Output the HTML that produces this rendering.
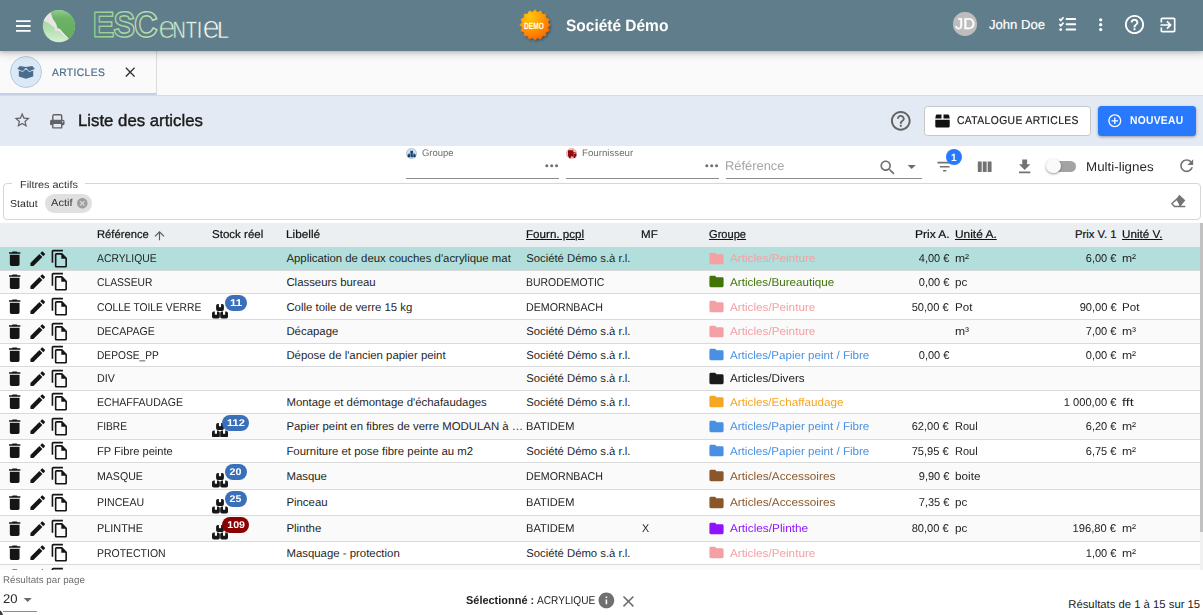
<!DOCTYPE html>
<html lang="fr"><head><meta charset="utf-8"><title>Liste des articles</title>
<style>
*{box-sizing:border-box;margin:0;padding:0}
html,body{width:1203px;height:615px;overflow:hidden;background:#fff;font-family:"Liberation Sans",Arial,sans-serif;color:#1f1f1f;text-rendering:geometricPrecision}
.abs{position:absolute}
#hdr{position:absolute;left:0;top:0;width:1203px;height:50.800px;background:#607d8b;box-shadow:0 0 9px 2px rgba(0,0,0,.2),0 0 4.500px rgba(0,0,0,.24);z-index:5}
#tabs{position:absolute;left:0;top:50px;width:1203px;height:46px;background:#fafafa;border-bottom:1px solid #dadada}
#tab{position:absolute;left:0;top:0;width:157px;height:45px;border-right:1px solid #dcdcdc;border-bottom:2px solid #c3d0e6}
#title{position:absolute;left:0;top:96px;width:1203px;height:50px;background:#e4eaf3}
#card{position:absolute;left:0;top:145.600px;width:1203px;height:470px;background:#fff;border-radius:4px 4px 0 0}
.t{position:absolute;white-space:nowrap}
svg{position:absolute;display:block}
#tbl{position:absolute;left:0;top:223px;width:1203px;height:346.600px;overflow:hidden}
#th{position:absolute;left:0;top:0;width:1200px;height:24px;background:#eceff1}
.row{position:absolute;left:0;width:1200px;border-bottom:1px solid #dadada;background:#fff}
.row.odd{background:#fafafa}
.row.sel{background:#b2dfdb}
.ic{width:19.400px;height:19.400px;fill:#151515}
.fo{width:17px;height:17px;left:707.500px}
.st{width:16px;height:14.600px;left:212px;fill:#171717}
.bd{position:absolute;height:16px;border-radius:8px}
</style></head><body>
<!-- HEADER -->
<div id="hdr">
 <svg style="left:16px;top:19.500px" width="16" height="12" viewBox="0 0 16 12"><path d="M0 1.200h14.600M0 6h14.600M0 10.800h14.600" stroke="#fff" stroke-width="1.800"/></svg>
 <svg style="left:42px;top:9px" width="34" height="34" viewBox="42 9 34 34">
  <defs><clipPath id="lc"><circle cx="58.900" cy="26.100" r="16.100"/></clipPath>
  <linearGradient id="l1" x1="0" y1="0" x2="0" y2="1"><stop offset="0" stop-color="#9fd49a"/><stop offset=".6" stop-color="#b4dfaf"/><stop offset="1" stop-color="#d6f0d2"/></linearGradient>
  <linearGradient id="l2" x1="0" y1="0" x2="0" y2="1"><stop offset="0" stop-color="#9bcf96"/><stop offset=".3" stop-color="#6db367"/><stop offset="1" stop-color="#62aa5c"/></linearGradient></defs>
  <circle cx="58.900" cy="26.100" r="16.100" fill="url(#l1)"/>
  <g clip-path="url(#lc)"><path d="M49 8L52.700 18.700L56.100 24.100L57.100 27.500L59.900 28.900L64 33.700L68 37.800L72 42L80 30L76 8Z" fill="url(#l2)"/>
  <path d="M43 19.500L50.300 12L52.700 18.700L56.100 24.100L57.100 27.500L56.800 28.600L59.900 28.900L64 33.700L68.600 38.400L64.700 36.500L60.100 32.100L57.800 30.700L55.400 31.300L54.700 29.900L55.100 28.600L52.700 26.200L48.200 22.800L43 20.500Z" fill="#e9e5e5"/></g>
 </svg>
 <svg style="left:90px;top:4px" width="144" height="42" viewBox="90 4 144 42">
  <defs><linearGradient id="tg" x1="94" x2="228" gradientUnits="userSpaceOnUse"><stop offset="0" stop-color="#93cd8b"/><stop offset=".5" stop-color="#c2e4bb"/><stop offset=".85" stop-color="#f4faf2"/><stop offset="1" stop-color="#ffffff"/></linearGradient></defs>
  <text font-family="Liberation Sans, sans-serif" y="35.800"><tspan x="93" font-size="33.600" fill="#607d8b" stroke="url(#tg)" stroke-width="3" paint-order="stroke fill" textLength="64" lengthAdjust="spacingAndGlyphs">ESC</tspan><tspan x="158.300" y="38" font-size="32.500" fill="url(#tg)" stroke="#607d8b" stroke-width=".9" textLength="17.300" lengthAdjust="spacingAndGlyphs">e</tspan><tspan x="172.600" y="37.800" font-size="23.700" fill="url(#tg)" stroke="#607d8b" stroke-width=".35" textLength="29.500" lengthAdjust="spacingAndGlyphs">NTI</tspan><tspan x="202.600" y="38" font-size="32.500" fill="url(#tg)" stroke="#607d8b" stroke-width=".9" textLength="17.300" lengthAdjust="spacingAndGlyphs">e</tspan><tspan x="217.300" y="37.800" font-size="23.700" fill="url(#tg)" stroke="#607d8b" stroke-width=".35" textLength="11.500" lengthAdjust="spacingAndGlyphs">L</tspan></text>
 </svg>
 <svg style="left:514.800px;top:5.300px" width="40" height="40" viewBox="-20 -20 40 40">
  <defs><radialGradient id="og" cx="32%" cy="22%" r="85%"><stop offset="0" stop-color="#ffc808"/><stop offset=".5" stop-color="#ff9a00"/><stop offset="1" stop-color="#ff6200"/></radialGradient>
  <filter id="bsh" x="-30%" y="-30%" width="160%" height="160%"><feGaussianBlur stdDeviation="0.900"/></filter></defs>
  <path d="M0.00 -15.30L2.56 -12.85L5.86 -14.14L7.28 -10.89L10.82 -10.82L10.89 -7.28L14.14 -5.86L12.85 -2.56L15.30 0.00L12.85 2.56L14.14 5.86L10.89 7.28L10.82 10.82L7.28 10.89L5.86 14.14L2.56 12.85L0.00 15.30L-2.56 12.85L-5.86 14.14L-7.28 10.89L-10.82 10.82L-10.89 7.28L-14.14 5.86L-12.85 2.56L-15.30 0.00L-12.85 -2.56L-14.14 -5.86L-10.89 -7.28L-10.82 -10.82L-7.28 -10.89L-5.86 -14.14L-2.56 -12.85Z" transform="translate(1.300 1.500)" fill="rgba(35,45,55,.55)" filter="url(#bsh)"/>
  <path d="M0.00 -15.30L2.56 -12.85L5.86 -14.14L7.28 -10.89L10.82 -10.82L10.89 -7.28L14.14 -5.86L12.85 -2.56L15.30 0.00L12.85 2.56L14.14 5.86L10.89 7.28L10.82 10.82L7.28 10.89L5.86 14.14L2.56 12.85L0.00 15.30L-2.56 12.85L-5.86 14.14L-7.28 10.89L-10.82 10.82L-10.89 7.28L-14.14 5.86L-12.85 2.56L-15.30 0.00L-12.85 -2.56L-14.14 -5.86L-10.89 -7.28L-10.82 -10.82L-7.28 -10.89L-5.86 -14.14L-2.56 -12.85Z" fill="url(#og)" stroke="url(#og)" stroke-width=".6" stroke-linejoin="round"/>
  <text x="-10.900" y="3.500" font-family="Liberation Sans, sans-serif" font-weight="bold" font-size="9" fill="#fff" textLength="19.800" lengthAdjust="spacingAndGlyphs">DEMO</text>
 </svg>
 <span class="t" style="top:18px;font-size:16.4px;line-height:16.4px;left:565.75px;transform-origin:0 0;transform:scaleX(0.9441);color:#fff;font-weight:bold;">Société Démo</span>
 <div class="abs" style="left:953.100px;top:12px;width:23.600px;height:23.600px;border-radius:50%;background:#bdbdbd"></div>
 <span class="t" style="top:17px;font-size:15.5px;line-height:15.5px;left:954.74px;transform-origin:0 0;transform:scaleX(1.0574);color:#fff;-webkit-text-stroke:.25px #fff">JD</span>
 <span class="t" style="top:18px;font-size:13.1px;line-height:13.1px;left:988.90px;transform-origin:0 0;color:#fff;-webkit-text-stroke:.2px #fff">John Doe</span>
 <svg style="left:1056px;top:14px" width="22" height="20" viewBox="1056 14 22 20" fill="none" stroke="#fff"><path d="M1059.300 18.900l1.500 1.500 2.700-3.100M1059.300 24.200l1.500 1.500 2.700-3.100" stroke-width="1.700"/><circle cx="1060.700" cy="29.600" r="1.450" fill="#fff" stroke="none"/><path d="M1066.600 19H1075.200M1066.600 24.300H1075.200M1066.600 29.600H1075.200" stroke-width="2" stroke-linecap="round"/></svg>
 <svg style="left:1091px;top:15.200px" width="19.400" height="19.400" viewBox="0 0 24 24" fill="#fff"><circle cx="12" cy="6" r="2"/><circle cx="12" cy="12" r="2"/><circle cx="12" cy="18" r="2"/></svg>
 <svg style="left:1123.300px;top:13.100px" width="23" height="23" viewBox="0 0 24 24" fill="#fff"><path d="M11 18h2v-2h-2v2zm1-16C6.480 2 2 6.480 2 12s4.480 10 10 10 10-4.480 10-10S17.520 2 12 2zm0 18c-4.410 0-8-3.590-8-8s3.590-8 8-8 8 3.590 8 8-3.590 8-8 8zm0-14c-2.210 0-4 1.790-4 4h2c0-1.100.9-2 2-2s2 .9 2 2c0 2-3 1.750-3 5h2c0-2.250 3-2.500 3-5 0-2.210-1.790-4-4-4z"/></svg>
 <svg style="left:1158.100px;top:14.800px" width="20" height="20" viewBox="0 0 24 24" fill="#fff"><path d="M10.090 15.590L11.500 17l5-5-5-5-1.410 1.410L12.670 11H3v2h9.670l-2.580 2.590zM19 3H5c-1.110 0-2 .9-2 2v4h2V5h14v14H5v-4H3v4c0 1.100.890 2 2 2h14c1.100 0 2-.9 2-2V5c0-1.100-.9-2-2-2z"/></svg>
</div>
<!-- TABS -->
<div id="tabs"><div id="tab">
 <div class="abs" style="left:10.100px;top:6px;width:31.800px;height:31.800px;border-radius:50%;background:#dbe9f6;border:1px solid #b6cae2"></div>
 <svg style="left:16px;top:14px" width="20" height="16" viewBox="16 64 20 16"><path d="M18.800 69.500H33.200V76.600L26 78.700L18.800 76.600Z" fill="#4a6c8f"/><path d="M19.800 66L26 66.900L32.200 66L35 68.900L29.200 70.700L26 67.900L22.800 70.700L17.200 68.900Z" fill="#4a6c8f"/><path d="M18.200 70.100L22.900 71.500L26 68.500L29.100 71.500L33.800 70.100" fill="none" stroke="#dbe9f6" stroke-width=".85"/></svg>
 <span class="t" style="top:18px;font-size:10.9px;line-height:10.9px;left:51.88px;transform-origin:0 0;transform:scaleX(0.9421);letter-spacing:0.425px;color:#4a6a8c;-webkit-text-stroke:.2px currentColor;">ARTICLES</span>
 <svg style="left:125px;top:16.700px" width="10.400" height="10.400" viewBox="0 0 10.400 10.400"><path d="M.8 .8l8.800 8.800M9.600 .8l-8.800 8.800" stroke="#333" stroke-width="1.350"/></svg>
</div></div>
<!-- TITLE BAR -->
<div id="title">
 <svg style="left:13.300px;top:15.200px" width="18.400" height="18.400" viewBox="0 0 24 24" fill="#636366"><path d="M22 9.240l-7.190-.62L12 2 9.190 8.630 2 9.240l5.460 4.730L5.820 21 12 17.270 18.180 21l-1.630-7.030L22 9.240zM12 15.400l-3.760 2.270 1-4.280-3.320-2.880 4.380-.38L12 6.100l1.710 4.040 4.380.38-3.320 2.880 1 4.280L12 15.400z"/></svg>
 <svg style="left:48px;top:16px" width="20" height="18" viewBox="48 112 20 18"><rect x="52.800" y="114.700" width="8.900" height="6" rx="1.300" fill="none" stroke="#636366" stroke-width="1.400"/><rect x="50" y="119.800" width="14.500" height="5.400" rx="1.500" fill="#636366"/><rect x="52.800" y="123.200" width="8.900" height="4.700" rx=".5" fill="#e4eaf3" stroke="#636366" stroke-width="1.400"/><circle cx="62.600" cy="121.700" r=".75" fill="#e4eaf3"/></svg>
 <span class="t" style="top:17px;font-size:16.6px;line-height:16.6px;left:77.82px;transform-origin:0 0;transform:scaleX(1.0104);color:#1b1b1b;-webkit-text-stroke:.4px #1b1b1b">Liste des articles</span>
 <svg style="left:888.800px;top:12.700px" width="23.600" height="23.600" viewBox="0 0 24 24" fill="#636366"><path d="M11 18h2v-2h-2v2zm1-16C6.480 2 2 6.480 2 12s4.480 10 10 10 10-4.480 10-10S17.520 2 12 2zm0 18c-4.410 0-8-3.590-8-8s3.590-8 8-8 8 3.590 8 8-3.590 8-8 8zm0-14c-2.210 0-4 1.790-4 4h2c0-1.100.9-2 2-2s2 .9 2 2c0 2-3 1.750-3 5h2c0-2.250 3-2.500 3-5 0-2.210-1.790-4-4-4z"/></svg>
 <div class="abs" style="left:924px;top:10.200px;width:166.500px;height:29.500px;background:#fff;border:1px solid #c6c6c6;border-radius:3.500px"></div>
 <svg style="left:935px;top:17.600px" width="15" height="14" viewBox="0 0 15 14" fill="#111"><path d="M.8 1.500 Q1 .4 2 .4 H6.500 V4.600 H.3 Z M8.500 .4 H13 Q14 .4 14.200 1.500 L14.700 4.600 H8.500 Z M.3 5.800 H14.700 V12.200 Q14.700 13.600 13.300 13.600 H1.700 Q.3 13.600 .3 12.200 Z"/></svg>
 <span class="t" style="top:20px;font-size:11.3px;line-height:11.3px;left:956.78px;transform-origin:0 0;transform:scaleX(0.9135);letter-spacing:0.438px;color:#1b1b1b;-webkit-text-stroke:.2px currentColor;">CATALOGUE ARTICLES</span>
 <div class="abs" style="left:1098px;top:10.300px;width:98px;height:29.300px;background:#2979ff;border-radius:3.500px;box-shadow:0 1px 3px rgba(0,0,0,.35)"></div>
 <svg style="left:1106.700px;top:17px" width="15.600" height="15.600" viewBox="0 0 24 24" fill="#fff"><path d="M13 7h-2v4H7v2h4v4h2v-4h4v-2h-4V7zm-1-5C6.480 2 2 6.480 2 12s4.480 10 10 10 10-4.480 10-10S17.520 2 12 2zm0 18c-4.410 0-8-3.590-8-8s3.590-8 8-8 8 3.590 8 8-3.590 8-8 8z"/></svg>
 <span class="t" style="top:20px;font-size:11.3px;line-height:11.3px;left:1129.71px;transform-origin:0 0;transform:scaleX(0.9082);letter-spacing:0.330px;color:#fff;font-weight:bold;">NOUVEAU</span>
</div>
<!-- CARD -->
<div id="card"></div>
<!-- FILTER BAR -->
<div id="fbar">
 <div class="abs" style="left:405.900px;top:148.100px;width:11.300px;height:11.300px;border-radius:50%;background:#d0e1f3;border:1px solid #adc6e2"></div>
 <svg style="left:406px;top:148px" width="12" height="12" viewBox="406 148 12 12" fill="#0f3a66"><rect x="410.400" y="150.800" width="2.500" height="2.500"/><rect x="411.300" y="153" width=".8" height="1.600"/><rect x="408.500" y="153.600" width="6.300" height=".75"/><rect x="407.700" y="154.300" width="2.300" height="2.900"/><rect x="410.500" y="154.300" width="2.300" height="2.900"/><rect x="413.300" y="154.300" width="2.300" height="2.900"/></svg>
 <span class="t" style="top:149px;font-size:9.6px;line-height:9.6px;left:422.32px;transform-origin:0 0;transform:scaleX(0.9874);color:#6e6e6e;">Groupe</span>
 <svg style="left:542.200px;top:155.800px" width="19.400" height="19.400" viewBox="0 0 24 24" fill="#707070"><circle cx="6" cy="12" r="1.900"/><circle cx="12" cy="12" r="1.900"/><circle cx="18" cy="12" r="1.900"/></svg>
 <div class="abs" style="left:406px;top:177.600px;width:152.600px;height:1px;background:#8c8c8c"></div>
 <div class="abs" style="left:565.900px;top:148.100px;width:11.400px;height:11.400px;border-radius:50%;background:#f4c3c7;border:1px solid #ecaab0"></div>
 <svg style="left:566px;top:148px" width="12" height="12" viewBox="566 148 12 12" fill="#8c0a0a"><rect x="568" y="150.200" width="5.300" height="6.400" rx=".4"/><path d="M573.300 151.900h1.700l1.400 1.900v2.800h-3.100z"/><circle cx="569.900" cy="157" r="1.150"/><circle cx="574.500" cy="157" r="1.150"/><path d="M574 152.700h.8l.8 1.100h-1.600z" fill="#f4c3c7"/></svg>
 <span class="t" style="top:149px;font-size:9.6px;line-height:9.6px;left:582.20px;transform-origin:0 0;transform:scaleX(1.0099);color:#6e6e6e;">Fournisseur</span>
 <svg style="left:702.400px;top:155.800px" width="19.400" height="19.400" viewBox="0 0 24 24" fill="#707070"><circle cx="6" cy="12" r="1.900"/><circle cx="12" cy="12" r="1.900"/><circle cx="18" cy="12" r="1.900"/></svg>
 <div class="abs" style="left:566px;top:177.600px;width:152.800px;height:1px;background:#8c8c8c"></div>
 <span class="t" style="top:160px;font-size:12.6px;line-height:12.6px;left:724.94px;transform-origin:0 0;transform:scaleX(1.0227);color:#a6a6a6;">Référence</span>
 <div class="abs" style="left:726px;top:177.600px;width:196px;height:1px;background:#8c8c8c"></div>
 <svg style="left:878.100px;top:158.300px" width="19.400" height="19.400" viewBox="0 0 24 24" fill="#727272"><path d="M15.500 14h-.79l-.28-.27C15.410 12.590 16 11.110 16 9.500 16 5.910 13.090 3 9.500 3S3 5.910 3 9.500 5.910 16 9.500 16c1.610 0 3.090-.59 4.230-1.570l.27.28v.79l5 4.990L20.490 19l-4.990-5zm-6 0C7.010 14 5 11.990 5 9.500S7.010 5 9.500 5 14 7.010 14 9.500 11.990 14 9.500 14z"/></svg>
 <svg style="left:901.900px;top:156.600px" width="19.400" height="19.400" viewBox="0 0 24 24" fill="#6a6a6a"><path d="M7 10l5 5 5-5z"/></svg>
 <svg style="left:935.200px;top:157.300px" width="19.400" height="19.400" viewBox="0 0 24 24" fill="#727272"><path d="M10 18h4v-2h-4v2zM3 6v2h18V6H3zm3 7h12v-2H6v2z"/></svg>
 <div class="abs" style="left:946.100px;top:149.200px;width:16px;height:16px;border-radius:50%;background:#2979ff"></div>
 <span class="t" style="top:154px;font-size:10.4px;line-height:10.4px;left:951.30px;transform-origin:0 0;transform:scaleX(0.9686);color:#fff;font-weight:bold;">1</span>
 <svg style="left:975px;top:156.900px" width="19.400" height="19.400" viewBox="0 0 24 24" fill="#727272"><path d="M3.500 5.500h4.800v13H3.500zM9.600 5.500h4.800v13H9.600zM15.700 5.500h4.800v13h-4.800z"/></svg>
 <svg style="left:1015px;top:157.300px" width="19.400" height="19.400" viewBox="0 0 24 24" fill="#727272"><path d="M19 9h-4V3H9v6H5l7 7 7-7zM5 18v2h14v-2H5z"/></svg>
 <div class="abs" style="left:1049px;top:160.800px;width:27px;height:11.100px;border-radius:6px;background:#a3a3a3"></div>
 <div class="abs" style="left:1046.100px;top:158.600px;width:14.800px;height:14.800px;border-radius:50%;background:#fafafa;box-shadow:0 1px 2.500px rgba(0,0,0,.4)"></div>
 <span class="t" style="top:161px;font-size:12.6px;line-height:12.6px;left:1085.50px;transform-origin:0 0;transform:scaleX(1.0609);color:#2a2a2a;">Multi-lignes</span>
 <svg style="left:1176.900px;top:156.400px" width="19.400" height="19.400" viewBox="0 0 24 24" fill="#727272"><path d="M17.650 6.350C16.200 4.900 14.210 4 12 4c-4.420 0-7.990 3.580-7.990 8s3.570 8 7.990 8c3.730 0 6.840-2.550 7.730-6h-2.080c-.82 2.330-3.040 4-5.650 4-3.310 0-6-2.690-6-6s2.690-6 6-6c1.660 0 3.140.69 4.220 1.780L13 11h7V4l-2.350 2.350z"/></svg>
</div>
<!-- ACTIVE FILTERS -->
<div class="abs" style="left:3px;top:183.200px;width:1198px;height:36.700px;border:1px solid #d6d6d6;border-radius:4px"></div>
<div class="abs" style="left:12px;top:182px;width:73px;height:4px;background:#fff"></div>
<span class="t" style="top:181px;font-size:10.1px;line-height:10.1px;left:19.51px;transform-origin:0 0;transform:scaleX(1.0750);color:#333;">Filtres actifs</span>
<span class="t" style="top:200px;font-size:10.1px;line-height:10.1px;left:10.32px;transform-origin:0 0;transform:scaleX(1.0487);color:#2a2a2a;">Statut</span>
<div class="abs" style="left:44.900px;top:194.200px;width:46.900px;height:18.500px;border-radius:9.300px;background:#e0e0e0"></div>
<span class="t" style="top:199px;font-size:10.1px;line-height:10.1px;left:51.18px;transform-origin:0 0;transform:scaleX(1.1000);color:#333;">Actif</span>
<svg style="left:76.200px;top:197.100px" width="12.600" height="12.600" viewBox="0 0 24 24" fill="#9e9e9e"><path d="M12 2C6.470 2 2 6.470 2 12s4.470 10 10 10 10-4.470 10-10S17.530 2 12 2zm5 13.590L15.590 17 12 13.410 8.410 17 7 15.590 10.590 12 7 8.410 8.410 7 12 10.590 15.590 7 17 8.410 13.410 12 17 15.590z"/></svg>
<svg style="left:1168px;top:192px" width="20" height="18" viewBox="1168 192 20 18"><path d="M1179.400 195.600L1184.500 200.400L1180.300 205.200L1176.900 199.500Z" fill="#747474" stroke="#747474" stroke-width="1.300" stroke-linejoin="round"/><path d="M1177.400 198.600L1171.800 203.500L1174.500 206.500H1184.800M1179 206.500L1181.500 203.800" fill="none" stroke="#747474" stroke-width="1.400" stroke-linejoin="round" stroke-linecap="round"/></svg>
<!-- TABLE -->
<div id="tbl">
 <div id="th"></div>
 <span class="t" style="top:7px;font-size:11.3px;line-height:11.3px;left:96.58px;transform-origin:0 0;transform:scaleX(0.9922);color:#111;-webkit-text-stroke:.2px currentColor;">Référence</span>
 <svg style="left:154px;top:8px" width="11" height="9.500" viewBox="0 0 11 9.500" fill="none" stroke="#5b5562" stroke-width="1.150"><path d="M5.500 9.200V.9M1 5.400L5.500 .9 10 5.400"/></svg>
 <span class="t" style="top:7px;font-size:11.3px;line-height:11.3px;left:211.58px;transform-origin:0 0;transform:scaleX(1.0211);color:#111;-webkit-text-stroke:.2px currentColor;">Stock réel</span>
 <span class="t" style="top:7px;font-size:11.3px;line-height:11.3px;left:285.93px;transform-origin:0 0;transform:scaleX(1.0434);color:#111;-webkit-text-stroke:.2px currentColor;">Libellé</span>
 <span class="t" style="top:7px;font-size:11.3px;line-height:11.3px;left:525.85px;transform-origin:0 0;transform:scaleX(1.0286);color:#111;-webkit-text-stroke:.2px currentColor;text-decoration:underline">Fourn. pcpl</span>
 <span class="t" style="top:7px;font-size:11.3px;line-height:11.3px;left:640.95px;transform-origin:0 0;transform:scaleX(1.0246);color:#111;-webkit-text-stroke:.2px currentColor;">MF</span>
 <span class="t" style="top:7px;font-size:11.3px;line-height:11.3px;left:708.74px;transform-origin:0 0;transform:scaleX(0.9831);color:#111;-webkit-text-stroke:.2px currentColor;text-decoration:underline">Groupe</span>
 <span class="t" style="top:7px;font-size:11.3px;line-height:11.3px;right:253.80px;transform-origin:100% 0;transform:scaleX(1.0620);color:#111;-webkit-text-stroke:.2px currentColor;">Prix A.</span>
 <span class="t" style="top:7px;font-size:11.3px;line-height:11.3px;left:954.68px;transform-origin:0 0;transform:scaleX(1.0542);color:#111;-webkit-text-stroke:.2px currentColor;text-decoration:underline">Unité A.</span>
 <span class="t" style="top:7px;font-size:11.3px;line-height:11.3px;right:86.45px;transform-origin:100% 0;color:#111;-webkit-text-stroke:.2px currentColor;">Prix V. 1</span>
 <span class="t" style="top:7px;font-size:11.3px;line-height:11.3px;left:1122.20px;transform-origin:0 0;transform:scaleX(1.0335);color:#111;-webkit-text-stroke:.2px currentColor;text-decoration:underline">Unité V.</span>
<div class="row sel" style="top:24.0px;height:24.0px"></div>
<svg class="ic" style="left:5.300px;top:25.8px" viewBox="0 0 24 24"><path d="M6 19c0 1.100.9 2 2 2h8c1.100 0 2-.9 2-2V7H6v12zM19 4h-3.500l-1-1h-5l-1 1H5v2h14V4z"/></svg><svg class="ic" style="left:27.500px;top:25.8px" viewBox="0 0 24 24"><path d="M3 17.250V21h3.750L17.810 9.940l-3.750-3.750L3 17.250zM20.710 7.040a.996.996 0 0 0 0-1.410l-2.340-2.340a.996.996 0 0 0-1.410 0l-1.830 1.830 3.750 3.750 1.830-1.830z"/></svg><svg class="ic" style="left:49.800px;top:25.8px" viewBox="0 0 24 24"><path d="M16 1H4c-1.100 0-2 .9-2 2v14h2V3h12V1zm-1 4H8c-1.100 0-1.990.9-1.990 2L6 21c0 1.100.890 2 1.990 2H19c1.100 0 2-.9 2-2V11l-6-6zM8 21V7h6v5h5v9H8z"/></svg>
<span class="t" style="top:31px;font-size:11.3px;line-height:11.3px;left:97.10px;transform-origin:0 0;transform:scaleX(0.9166);">ACRYLIQUE</span>
<span class="t" style="top:31px;font-size:11.4px;line-height:11.4px;left:286.40px;transform-origin:0 0;">Application de deux couches d'acrylique mat</span>
<span class="t" style="top:31px;font-size:11.3px;line-height:11.3px;left:526.20px;transform-origin:0 0;">Société Démo s.à r.l.</span>
<svg class="fo" style="top:26.5px" viewBox="0 0 24 24" fill="#f4a0a4"><path d="M10 4H4c-1.100 0-1.990.9-1.990 2L2 18c0 1.100.9 2 2 2h16c1.100 0 2-.9 2-2V8c0-1.100-.9-2-2-2h-8l-2-2z"/></svg>
<span class="t" style="top:31px;font-size:11.3px;line-height:11.3px;left:729.75px;transform-origin:0 0;transform:scaleX(1.0374);color:#f4a0a4;">Articles/Peinture</span>
<span class="t" style="top:31px;font-size:11.3px;line-height:11.3px;right:254.00px;transform-origin:100% 0;transform:scaleX(0.9759);">4,00 €</span>
<span class="t" style="top:31px;font-size:11.3px;line-height:11.3px;left:954.60px;transform-origin:0 0;transform:scaleX(1.0747);">m²</span>
<span class="t" style="top:31px;font-size:11.3px;line-height:11.3px;right:86.60px;transform-origin:100% 0;transform:scaleX(0.9759);">6,00 €</span>
<span class="t" style="top:31px;font-size:11.3px;line-height:11.3px;left:1122.10px;transform-origin:0 0;transform:scaleX(1.0747);">m²</span>
<div class="row odd" style="top:48.0px;height:23.0px"></div>
<svg class="ic" style="left:5.300px;top:49.3px" viewBox="0 0 24 24"><path d="M6 19c0 1.100.9 2 2 2h8c1.100 0 2-.9 2-2V7H6v12zM19 4h-3.500l-1-1h-5l-1 1H5v2h14V4z"/></svg><svg class="ic" style="left:27.500px;top:49.3px" viewBox="0 0 24 24"><path d="M3 17.250V21h3.750L17.810 9.940l-3.750-3.750L3 17.250zM20.710 7.040a.996.996 0 0 0 0-1.410l-2.340-2.340a.996.996 0 0 0-1.410 0l-1.830 1.830 3.750 3.750 1.830-1.830z"/></svg><svg class="ic" style="left:49.800px;top:49.3px" viewBox="0 0 24 24"><path d="M16 1H4c-1.100 0-2 .9-2 2v14h2V3h12V1zm-1 4H8c-1.100 0-1.990.9-1.990 2L6 21c0 1.100.890 2 1.990 2H19c1.100 0 2-.9 2-2V11l-6-6zM8 21V7h6v5h5v9H8z"/></svg>
<span class="t" style="top:55px;font-size:11.3px;line-height:11.3px;left:97.10px;transform-origin:0 0;transform:scaleX(0.9097);">CLASSEUR</span>
<span class="t" style="top:55px;font-size:11.4px;line-height:11.4px;left:286.40px;transform-origin:0 0;">Classeurs bureau</span>
<span class="t" style="top:55px;font-size:11.3px;line-height:11.3px;left:526.20px;transform-origin:0 0;transform:scaleX(0.9254);">BURODEMOTIC</span>
<svg class="fo" style="top:50.0px" viewBox="0 0 24 24" fill="#417505"><path d="M10 4H4c-1.100 0-1.990.9-1.990 2L2 18c0 1.100.9 2 2 2h16c1.100 0 2-.9 2-2V8c0-1.100-.9-2-2-2h-8l-2-2z"/></svg>
<span class="t" style="top:55px;font-size:11.3px;line-height:11.3px;left:729.75px;transform-origin:0 0;transform:scaleX(1.0305);color:#417505;">Articles/Bureautique</span>
<span class="t" style="top:55px;font-size:11.3px;line-height:11.3px;right:254.00px;transform-origin:100% 0;transform:scaleX(0.9759);">0,00 €</span>
<span class="t" style="top:55px;font-size:11.3px;line-height:11.3px;left:954.60px;transform-origin:0 0;transform:scaleX(1.0356);">pc</span>
<div class="row" style="top:71.0px;height:26.0px"></div>
<svg class="ic" style="left:5.300px;top:73.8px" viewBox="0 0 24 24"><path d="M6 19c0 1.100.9 2 2 2h8c1.100 0 2-.9 2-2V7H6v12zM19 4h-3.500l-1-1h-5l-1 1H5v2h14V4z"/></svg><svg class="ic" style="left:27.500px;top:73.8px" viewBox="0 0 24 24"><path d="M3 17.250V21h3.750L17.810 9.940l-3.750-3.750L3 17.250zM20.710 7.040a.996.996 0 0 0 0-1.410l-2.340-2.340a.996.996 0 0 0-1.410 0l-1.830 1.830 3.750 3.750 1.830-1.830z"/></svg><svg class="ic" style="left:49.800px;top:73.8px" viewBox="0 0 24 24"><path d="M16 1H4c-1.100 0-2 .9-2 2v14h2V3h12V1zm-1 4H8c-1.100 0-1.990.9-1.990 2L6 21c0 1.100.890 2 1.990 2H19c1.100 0 2-.9 2-2V11l-6-6zM8 21V7h6v5h5v9H8z"/></svg>
<span class="t" style="top:80px;font-size:11.3px;line-height:11.3px;left:97.10px;transform-origin:0 0;transform:scaleX(0.9106);">COLLE TOILE VERRE</span>
<svg class="st" style="top:81.0px" viewBox="0 0 16 14.600"><path d="M4.100 0m1.800 0h1.000v2.600q0 .6.600.6h1.000q.6 0 .6-.6v-2.600h1.000q1.800 0 1.800 1.800v3.400q0 1.800-1.800 1.800h-4.200q-1.800 0-1.800-1.800v-3.400q0-1.800 1.800-1.800zM0 7.600m1.800 0h1.000v2.600q0 .6.600.6h1.000q.6 0 .6-.6v-2.600h1.000q1.800 0 1.800 1.800v3.400q0 1.800-1.800 1.800h-4.200q-1.800 0-1.800-1.800v-3.400q0-1.800 1.800-1.800zM8.200 7.600m1.800 0h1.000v2.600q0 .6.600.6h1.000q.6 0 .6-.6v-2.600h1.000q1.800 0 1.800 1.800v3.400q0 1.800-1.800 1.800h-4.200q-1.800 0-1.800-1.800v-3.400q0-1.800 1.800-1.800z"/></svg>
<span class="bd" style="top:72px;left:225.1px;width:21.5px;background:#3a6fba"></span>
<span class="t" style="top:76px;font-size:9.8px;line-height:9.8px;left:230.62px;transform-origin:50% 0;transform:scaleX(1.1722);color:#fff;font-weight:bold;">11</span>
<span class="t" style="top:80px;font-size:11.4px;line-height:11.4px;left:286.40px;transform-origin:0 0;">Colle toile de verre 15 kg</span>
<span class="t" style="top:80px;font-size:11.3px;line-height:11.3px;left:526.20px;transform-origin:0 0;transform:scaleX(0.9434);">DEMORNBACH</span>
<svg class="fo" style="top:74.5px" viewBox="0 0 24 24" fill="#f4a0a4"><path d="M10 4H4c-1.100 0-1.990.9-1.990 2L2 18c0 1.100.9 2 2 2h16c1.100 0 2-.9 2-2V8c0-1.100-.9-2-2-2h-8l-2-2z"/></svg>
<span class="t" style="top:80px;font-size:11.3px;line-height:11.3px;left:729.75px;transform-origin:0 0;transform:scaleX(1.0374);color:#f4a0a4;">Articles/Peinture</span>
<span class="t" style="top:80px;font-size:11.3px;line-height:11.3px;right:254.00px;transform-origin:100% 0;transform:scaleX(0.9831);">50,00 €</span>
<span class="t" style="top:80px;font-size:11.3px;line-height:11.3px;left:954.60px;transform-origin:0 0;transform:scaleX(1.0264);">Pot</span>
<span class="t" style="top:80px;font-size:11.3px;line-height:11.3px;right:86.60px;transform-origin:100% 0;transform:scaleX(0.9831);">90,00 €</span>
<span class="t" style="top:80px;font-size:11.3px;line-height:11.3px;left:1122.10px;transform-origin:0 0;transform:scaleX(1.0264);">Pot</span>
<div class="row odd" style="top:97.0px;height:24.0px"></div>
<svg class="ic" style="left:5.300px;top:98.8px" viewBox="0 0 24 24"><path d="M6 19c0 1.100.9 2 2 2h8c1.100 0 2-.9 2-2V7H6v12zM19 4h-3.500l-1-1h-5l-1 1H5v2h14V4z"/></svg><svg class="ic" style="left:27.500px;top:98.8px" viewBox="0 0 24 24"><path d="M3 17.250V21h3.750L17.810 9.940l-3.750-3.750L3 17.250zM20.710 7.040a.996.996 0 0 0 0-1.410l-2.340-2.340a.996.996 0 0 0-1.410 0l-1.830 1.830 3.750 3.750 1.830-1.830z"/></svg><svg class="ic" style="left:49.800px;top:98.8px" viewBox="0 0 24 24"><path d="M16 1H4c-1.100 0-2 .9-2 2v14h2V3h12V1zm-1 4H8c-1.100 0-1.990.9-1.990 2L6 21c0 1.100.890 2 1.990 2H19c1.100 0 2-.9 2-2V11l-6-6zM8 21V7h6v5h5v9H8z"/></svg>
<span class="t" style="top:104px;font-size:11.3px;line-height:11.3px;left:97.10px;transform-origin:0 0;transform:scaleX(0.9311);">DECAPAGE</span>
<span class="t" style="top:104px;font-size:11.4px;line-height:11.4px;left:286.40px;transform-origin:0 0;">Décapage</span>
<span class="t" style="top:104px;font-size:11.3px;line-height:11.3px;left:526.20px;transform-origin:0 0;">Société Démo s.à r.l.</span>
<svg class="fo" style="top:99.5px" viewBox="0 0 24 24" fill="#f4a0a4"><path d="M10 4H4c-1.100 0-1.990.9-1.990 2L2 18c0 1.100.9 2 2 2h16c1.100 0 2-.9 2-2V8c0-1.100-.9-2-2-2h-8l-2-2z"/></svg>
<span class="t" style="top:104px;font-size:11.3px;line-height:11.3px;left:729.75px;transform-origin:0 0;transform:scaleX(1.0374);color:#f4a0a4;">Articles/Peinture</span>
<span class="t" style="top:104px;font-size:11.3px;line-height:11.3px;left:954.60px;transform-origin:0 0;transform:scaleX(1.0747);">m³</span>
<span class="t" style="top:104px;font-size:11.3px;line-height:11.3px;right:86.60px;transform-origin:100% 0;transform:scaleX(0.9759);">7,00 €</span>
<span class="t" style="top:104px;font-size:11.3px;line-height:11.3px;left:1122.10px;transform-origin:0 0;transform:scaleX(1.0747);">m³</span>
<div class="row" style="top:121.0px;height:23.0px"></div>
<svg class="ic" style="left:5.300px;top:122.3px" viewBox="0 0 24 24"><path d="M6 19c0 1.100.9 2 2 2h8c1.100 0 2-.9 2-2V7H6v12zM19 4h-3.500l-1-1h-5l-1 1H5v2h14V4z"/></svg><svg class="ic" style="left:27.500px;top:122.3px" viewBox="0 0 24 24"><path d="M3 17.250V21h3.750L17.810 9.940l-3.750-3.750L3 17.250zM20.710 7.040a.996.996 0 0 0 0-1.410l-2.340-2.340a.996.996 0 0 0-1.410 0l-1.830 1.830 3.750 3.750 1.830-1.830z"/></svg><svg class="ic" style="left:49.800px;top:122.3px" viewBox="0 0 24 24"><path d="M16 1H4c-1.100 0-2 .9-2 2v14h2V3h12V1zm-1 4H8c-1.100 0-1.990.9-1.990 2L6 21c0 1.100.890 2 1.990 2H19c1.100 0 2-.9 2-2V11l-6-6zM8 21V7h6v5h5v9H8z"/></svg>
<span class="t" style="top:128px;font-size:11.3px;line-height:11.3px;left:97.10px;transform-origin:0 0;transform:scaleX(0.9021);">DEPOSE_PP</span>
<span class="t" style="top:128px;font-size:11.4px;line-height:11.4px;left:286.40px;transform-origin:0 0;">Dépose de l'ancien papier peint</span>
<span class="t" style="top:128px;font-size:11.3px;line-height:11.3px;left:526.20px;transform-origin:0 0;">Société Démo s.à r.l.</span>
<svg class="fo" style="top:123.0px" viewBox="0 0 24 24" fill="#4a90e2"><path d="M10 4H4c-1.100 0-1.990.9-1.990 2L2 18c0 1.100.9 2 2 2h16c1.100 0 2-.9 2-2V8c0-1.100-.9-2-2-2h-8l-2-2z"/></svg>
<span class="t" style="top:128px;font-size:11.3px;line-height:11.3px;left:729.75px;transform-origin:0 0;transform:scaleX(1.0273);color:#4a90e2;">Articles/Papier peint / Fibre</span>
<span class="t" style="top:128px;font-size:11.3px;line-height:11.3px;right:254.00px;transform-origin:100% 0;transform:scaleX(0.9759);">0,00 €</span>
<span class="t" style="top:128px;font-size:11.3px;line-height:11.3px;right:86.60px;transform-origin:100% 0;transform:scaleX(0.9759);">0,00 €</span>
<span class="t" style="top:128px;font-size:11.3px;line-height:11.3px;left:1122.10px;transform-origin:0 0;transform:scaleX(1.0747);">m²</span>
<div class="row odd" style="top:144.0px;height:24.0px"></div>
<svg class="ic" style="left:5.300px;top:145.8px" viewBox="0 0 24 24"><path d="M6 19c0 1.100.9 2 2 2h8c1.100 0 2-.9 2-2V7H6v12zM19 4h-3.500l-1-1h-5l-1 1H5v2h14V4z"/></svg><svg class="ic" style="left:27.500px;top:145.8px" viewBox="0 0 24 24"><path d="M3 17.250V21h3.750L17.810 9.940l-3.750-3.750L3 17.250zM20.710 7.040a.996.996 0 0 0 0-1.410l-2.340-2.340a.996.996 0 0 0-1.410 0l-1.830 1.830 3.750 3.750 1.830-1.830z"/></svg><svg class="ic" style="left:49.800px;top:145.8px" viewBox="0 0 24 24"><path d="M16 1H4c-1.100 0-2 .9-2 2v14h2V3h12V1zm-1 4H8c-1.100 0-1.990.9-1.990 2L6 21c0 1.100.890 2 1.990 2H19c1.100 0 2-.9 2-2V11l-6-6zM8 21V7h6v5h5v9H8z"/></svg>
<span class="t" style="top:151px;font-size:11.3px;line-height:11.3px;left:97.10px;transform-origin:0 0;transform:scaleX(0.9462);">DIV</span>
<span class="t" style="top:151px;font-size:11.3px;line-height:11.3px;left:526.20px;transform-origin:0 0;">Société Démo s.à r.l.</span>
<svg class="fo" style="top:146.5px" viewBox="0 0 24 24" fill="#1a1a1a"><path d="M10 4H4c-1.100 0-1.990.9-1.990 2L2 18c0 1.100.9 2 2 2h16c1.100 0 2-.9 2-2V8c0-1.100-.9-2-2-2h-8l-2-2z"/></svg>
<span class="t" style="top:151px;font-size:11.3px;line-height:11.3px;left:729.75px;transform-origin:0 0;transform:scaleX(1.0344);color:#212121;">Articles/Divers</span>
<div class="row" style="top:168.0px;height:23.0px"></div>
<svg class="ic" style="left:5.300px;top:169.3px" viewBox="0 0 24 24"><path d="M6 19c0 1.100.9 2 2 2h8c1.100 0 2-.9 2-2V7H6v12zM19 4h-3.500l-1-1h-5l-1 1H5v2h14V4z"/></svg><svg class="ic" style="left:27.500px;top:169.3px" viewBox="0 0 24 24"><path d="M3 17.250V21h3.750L17.810 9.940l-3.750-3.750L3 17.250zM20.710 7.040a.996.996 0 0 0 0-1.410l-2.340-2.340a.996.996 0 0 0-1.410 0l-1.830 1.830 3.750 3.750 1.830-1.830z"/></svg><svg class="ic" style="left:49.800px;top:169.3px" viewBox="0 0 24 24"><path d="M16 1H4c-1.100 0-2 .9-2 2v14h2V3h12V1zm-1 4H8c-1.100 0-1.990.9-1.990 2L6 21c0 1.100.890 2 1.990 2H19c1.100 0 2-.9 2-2V11l-6-6zM8 21V7h6v5h5v9H8z"/></svg>
<span class="t" style="top:175px;font-size:11.3px;line-height:11.3px;left:97.10px;transform-origin:0 0;transform:scaleX(0.9325);">ECHAFFAUDAGE</span>
<span class="t" style="top:175px;font-size:11.4px;line-height:11.4px;left:286.40px;transform-origin:0 0;">Montage et démontage d'échafaudages</span>
<span class="t" style="top:175px;font-size:11.3px;line-height:11.3px;left:526.20px;transform-origin:0 0;">Société Démo s.à r.l.</span>
<svg class="fo" style="top:170.0px" viewBox="0 0 24 24" fill="#f5a623"><path d="M10 4H4c-1.100 0-1.990.9-1.990 2L2 18c0 1.100.9 2 2 2h16c1.100 0 2-.9 2-2V8c0-1.100-.9-2-2-2h-8l-2-2z"/></svg>
<span class="t" style="top:175px;font-size:11.3px;line-height:11.3px;left:729.75px;transform-origin:0 0;transform:scaleX(1.0349);color:#f5a623;">Articles/Echaffaudage</span>
<span class="t" style="top:175px;font-size:11.3px;line-height:11.3px;right:86.60px;transform-origin:100% 0;transform:scaleX(0.9866);">1 000,00 €</span>
<span class="t" style="top:175px;font-size:11.3px;line-height:11.3px;left:1122.10px;transform-origin:0 0;transform:scaleX(1.2626);">fft</span>
<div class="row odd" style="top:191.0px;height:26.0px"></div>
<svg class="ic" style="left:5.300px;top:193.8px" viewBox="0 0 24 24"><path d="M6 19c0 1.100.9 2 2 2h8c1.100 0 2-.9 2-2V7H6v12zM19 4h-3.500l-1-1h-5l-1 1H5v2h14V4z"/></svg><svg class="ic" style="left:27.500px;top:193.8px" viewBox="0 0 24 24"><path d="M3 17.250V21h3.750L17.810 9.940l-3.750-3.750L3 17.250zM20.710 7.040a.996.996 0 0 0 0-1.410l-2.340-2.340a.996.996 0 0 0-1.410 0l-1.830 1.830 3.750 3.750 1.830-1.830z"/></svg><svg class="ic" style="left:49.800px;top:193.8px" viewBox="0 0 24 24"><path d="M16 1H4c-1.100 0-2 .9-2 2v14h2V3h12V1zm-1 4H8c-1.100 0-1.990.9-1.990 2L6 21c0 1.100.890 2 1.990 2H19c1.100 0 2-.9 2-2V11l-6-6zM8 21V7h6v5h5v9H8z"/></svg>
<span class="t" style="top:199px;font-size:11.3px;line-height:11.3px;left:97.10px;transform-origin:0 0;transform:scaleX(0.9013);">FIBRE</span>
<svg class="st" style="top:199.7px" viewBox="0 0 16 14.600"><path d="M4.100 0m1.800 0h1.000v2.600q0 .6.600.6h1.000q.6 0 .6-.6v-2.600h1.000q1.800 0 1.800 1.800v3.400q0 1.800-1.800 1.800h-4.200q-1.800 0-1.800-1.800v-3.400q0-1.800 1.800-1.800zM0 7.600m1.800 0h1.000v2.600q0 .6.600.6h1.000q.6 0 .6-.6v-2.600h1.000q1.800 0 1.800 1.800v3.400q0 1.800-1.800 1.800h-4.200q-1.800 0-1.800-1.800v-3.400q0-1.800 1.800-1.800zM8.200 7.600m1.800 0h1.000v2.600q0 .6.600.6h1.000q.6 0 .6-.6v-2.600h1.000q1.800 0 1.800 1.800v3.400q0 1.800-1.800 1.800h-4.200q-1.800 0-1.800-1.800v-3.400q0-1.800 1.800-1.800z"/></svg>
<span class="bd" style="top:192px;left:222.3px;width:27.0px;background:#3a6fba"></span>
<span class="t" style="top:196px;font-size:9.8px;line-height:9.8px;left:227.89px;transform-origin:50% 0;transform:scaleX(1.1248);color:#fff;font-weight:bold;">112</span>
<span class="t" style="top:199px;font-size:11.4px;line-height:11.4px;left:286.40px;transform-origin:0 0;">Papier peint en fibres de verre MODULAN à …</span>
<span class="t" style="top:199px;font-size:11.3px;line-height:11.3px;left:526.20px;transform-origin:0 0;transform:scaleX(0.9791);">BATIDEM</span>
<svg class="fo" style="top:194.5px" viewBox="0 0 24 24" fill="#4a90e2"><path d="M10 4H4c-1.100 0-1.990.9-1.990 2L2 18c0 1.100.9 2 2 2h16c1.100 0 2-.9 2-2V8c0-1.100-.9-2-2-2h-8l-2-2z"/></svg>
<span class="t" style="top:199px;font-size:11.3px;line-height:11.3px;left:729.75px;transform-origin:0 0;transform:scaleX(1.0273);color:#4a90e2;">Articles/Papier peint / Fibre</span>
<span class="t" style="top:199px;font-size:11.3px;line-height:11.3px;right:254.00px;transform-origin:100% 0;transform:scaleX(0.9831);">62,00 €</span>
<span class="t" style="top:199px;font-size:11.3px;line-height:11.3px;left:954.60px;transform-origin:0 0;transform:scaleX(0.9715);">Roul</span>
<span class="t" style="top:199px;font-size:11.3px;line-height:11.3px;right:86.60px;transform-origin:100% 0;transform:scaleX(0.9759);">6,20 €</span>
<span class="t" style="top:199px;font-size:11.3px;line-height:11.3px;left:1122.10px;transform-origin:0 0;transform:scaleX(1.0747);">m²</span>
<div class="row" style="top:217.0px;height:23.0px"></div>
<svg class="ic" style="left:5.300px;top:218.3px" viewBox="0 0 24 24"><path d="M6 19c0 1.100.9 2 2 2h8c1.100 0 2-.9 2-2V7H6v12zM19 4h-3.500l-1-1h-5l-1 1H5v2h14V4z"/></svg><svg class="ic" style="left:27.500px;top:218.3px" viewBox="0 0 24 24"><path d="M3 17.250V21h3.750L17.810 9.940l-3.750-3.750L3 17.250zM20.710 7.040a.996.996 0 0 0 0-1.410l-2.340-2.340a.996.996 0 0 0-1.410 0l-1.830 1.830 3.750 3.750 1.830-1.830z"/></svg><svg class="ic" style="left:49.800px;top:218.3px" viewBox="0 0 24 24"><path d="M16 1H4c-1.100 0-2 .9-2 2v14h2V3h12V1zm-1 4H8c-1.100 0-1.990.9-1.990 2L6 21c0 1.100.890 2 1.990 2H19c1.100 0 2-.9 2-2V11l-6-6zM8 21V7h6v5h5v9H8z"/></svg>
<span class="t" style="top:224px;font-size:11.3px;line-height:11.3px;left:97.10px;transform-origin:0 0;transform:scaleX(0.9834);">FP Fibre peinte</span>
<span class="t" style="top:224px;font-size:11.4px;line-height:11.4px;left:286.40px;transform-origin:0 0;">Fourniture et pose fibre peinte au m2</span>
<span class="t" style="top:224px;font-size:11.3px;line-height:11.3px;left:526.20px;transform-origin:0 0;">Société Démo s.à r.l.</span>
<svg class="fo" style="top:219.0px" viewBox="0 0 24 24" fill="#4a90e2"><path d="M10 4H4c-1.100 0-1.990.9-1.990 2L2 18c0 1.100.9 2 2 2h16c1.100 0 2-.9 2-2V8c0-1.100-.9-2-2-2h-8l-2-2z"/></svg>
<span class="t" style="top:224px;font-size:11.3px;line-height:11.3px;left:729.75px;transform-origin:0 0;transform:scaleX(1.0273);color:#4a90e2;">Articles/Papier peint / Fibre</span>
<span class="t" style="top:224px;font-size:11.3px;line-height:11.3px;right:254.00px;transform-origin:100% 0;transform:scaleX(0.9831);">75,95 €</span>
<span class="t" style="top:224px;font-size:11.3px;line-height:11.3px;left:954.60px;transform-origin:0 0;transform:scaleX(0.9715);">Roul</span>
<span class="t" style="top:224px;font-size:11.3px;line-height:11.3px;right:86.60px;transform-origin:100% 0;transform:scaleX(0.9759);">6,75 €</span>
<span class="t" style="top:224px;font-size:11.3px;line-height:11.3px;left:1122.10px;transform-origin:0 0;transform:scaleX(1.0747);">m²</span>
<div class="row odd" style="top:240.0px;height:27.0px"></div>
<svg class="ic" style="left:5.300px;top:243.3px" viewBox="0 0 24 24"><path d="M6 19c0 1.100.9 2 2 2h8c1.100 0 2-.9 2-2V7H6v12zM19 4h-3.500l-1-1h-5l-1 1H5v2h14V4z"/></svg><svg class="ic" style="left:27.500px;top:243.3px" viewBox="0 0 24 24"><path d="M3 17.250V21h3.750L17.810 9.940l-3.750-3.750L3 17.250zM20.710 7.040a.996.996 0 0 0 0-1.410l-2.340-2.340a.996.996 0 0 0-1.410 0l-1.830 1.830 3.750 3.750 1.830-1.830z"/></svg><svg class="ic" style="left:49.800px;top:243.3px" viewBox="0 0 24 24"><path d="M16 1H4c-1.100 0-2 .9-2 2v14h2V3h12V1zm-1 4H8c-1.100 0-1.990.9-1.990 2L6 21c0 1.100.890 2 1.990 2H19c1.100 0 2-.9 2-2V11l-6-6zM8 21V7h6v5h5v9H8z"/></svg>
<span class="t" style="top:249px;font-size:11.3px;line-height:11.3px;left:97.10px;transform-origin:0 0;transform:scaleX(0.9365);">MASQUE</span>
<svg class="st" style="top:250.0px" viewBox="0 0 16 14.600"><path d="M4.100 0m1.800 0h1.000v2.600q0 .6.600.6h1.000q.6 0 .6-.6v-2.600h1.000q1.800 0 1.800 1.800v3.400q0 1.800-1.800 1.800h-4.200q-1.800 0-1.800-1.800v-3.400q0-1.800 1.800-1.800zM0 7.600m1.800 0h1.000v2.600q0 .6.600.6h1.000q.6 0 .6-.6v-2.600h1.000q1.800 0 1.800 1.800v3.400q0 1.800-1.800 1.800h-4.200q-1.800 0-1.800-1.800v-3.400q0-1.800 1.800-1.800zM8.200 7.600m1.800 0h1.000v2.600q0 .6.600.6h1.000q.6 0 .6-.6v-2.600h1.000q1.800 0 1.800 1.800v3.400q0 1.800-1.800 1.800h-4.200q-1.800 0-1.800-1.800v-3.400q0-1.800 1.800-1.800z"/></svg>
<span class="bd" style="top:241px;left:225.1px;width:21.5px;background:#3a6fba"></span>
<span class="t" style="top:245px;font-size:9.8px;line-height:9.8px;left:230.35px;transform-origin:50% 0;transform:scaleX(1.0920);color:#fff;font-weight:bold;">20</span>
<span class="t" style="top:249px;font-size:11.4px;line-height:11.4px;left:286.40px;transform-origin:0 0;">Masque</span>
<span class="t" style="top:249px;font-size:11.3px;line-height:11.3px;left:526.20px;transform-origin:0 0;transform:scaleX(0.9434);">DEMORNBACH</span>
<svg class="fo" style="top:244.0px" viewBox="0 0 24 24" fill="#8b572a"><path d="M10 4H4c-1.100 0-1.990.9-1.990 2L2 18c0 1.100.9 2 2 2h16c1.100 0 2-.9 2-2V8c0-1.100-.9-2-2-2h-8l-2-2z"/></svg>
<span class="t" style="top:249px;font-size:11.3px;line-height:11.3px;left:729.75px;transform-origin:0 0;transform:scaleX(1.0422);color:#8b572a;">Articles/Accessoires</span>
<span class="t" style="top:249px;font-size:11.3px;line-height:11.3px;right:254.00px;transform-origin:100% 0;transform:scaleX(0.9759);">9,90 €</span>
<span class="t" style="top:249px;font-size:11.3px;line-height:11.3px;left:954.60px;transform-origin:0 0;transform:scaleX(1.0379);">boite</span>
<div class="row" style="top:267.0px;height:26.0px"></div>
<svg class="ic" style="left:5.300px;top:269.8px" viewBox="0 0 24 24"><path d="M6 19c0 1.100.9 2 2 2h8c1.100 0 2-.9 2-2V7H6v12zM19 4h-3.500l-1-1h-5l-1 1H5v2h14V4z"/></svg><svg class="ic" style="left:27.500px;top:269.8px" viewBox="0 0 24 24"><path d="M3 17.250V21h3.750L17.810 9.940l-3.750-3.750L3 17.250zM20.710 7.040a.996.996 0 0 0 0-1.410l-2.340-2.340a.996.996 0 0 0-1.410 0l-1.830 1.830 3.750 3.750 1.830-1.830z"/></svg><svg class="ic" style="left:49.800px;top:269.8px" viewBox="0 0 24 24"><path d="M16 1H4c-1.100 0-2 .9-2 2v14h2V3h12V1zm-1 4H8c-1.100 0-1.990.9-1.990 2L6 21c0 1.100.890 2 1.990 2H19c1.100 0 2-.9 2-2V11l-6-6zM8 21V7h6v5h5v9H8z"/></svg>
<span class="t" style="top:275px;font-size:11.3px;line-height:11.3px;left:97.10px;transform-origin:0 0;transform:scaleX(0.9388);">PINCEAU</span>
<svg class="st" style="top:276.0px" viewBox="0 0 16 14.600"><path d="M4.100 0m1.800 0h1.000v2.600q0 .6.600.6h1.000q.6 0 .6-.6v-2.600h1.000q1.800 0 1.800 1.800v3.400q0 1.800-1.800 1.800h-4.200q-1.800 0-1.800-1.800v-3.400q0-1.800 1.800-1.800zM0 7.600m1.800 0h1.000v2.600q0 .6.600.6h1.000q.6 0 .6-.6v-2.600h1.000q1.800 0 1.800 1.800v3.400q0 1.800-1.800 1.800h-4.200q-1.800 0-1.800-1.800v-3.400q0-1.800 1.800-1.800zM8.200 7.600m1.800 0h1.000v2.600q0 .6.600.6h1.000q.6 0 .6-.6v-2.600h1.000q1.800 0 1.800 1.800v3.400q0 1.800-1.800 1.800h-4.200q-1.800 0-1.800-1.800v-3.400q0-1.800 1.800-1.800z"/></svg>
<span class="bd" style="top:268px;left:225.1px;width:21.5px;background:#3a6fba"></span>
<span class="t" style="top:272px;font-size:9.8px;line-height:9.8px;left:230.35px;transform-origin:50% 0;transform:scaleX(1.0783);color:#fff;font-weight:bold;">25</span>
<span class="t" style="top:275px;font-size:11.4px;line-height:11.4px;left:286.40px;transform-origin:0 0;">Pinceau</span>
<span class="t" style="top:275px;font-size:11.3px;line-height:11.3px;left:526.20px;transform-origin:0 0;transform:scaleX(0.9791);">BATIDEM</span>
<svg class="fo" style="top:270.5px" viewBox="0 0 24 24" fill="#8b572a"><path d="M10 4H4c-1.100 0-1.990.9-1.990 2L2 18c0 1.100.9 2 2 2h16c1.100 0 2-.9 2-2V8c0-1.100-.9-2-2-2h-8l-2-2z"/></svg>
<span class="t" style="top:275px;font-size:11.3px;line-height:11.3px;left:729.75px;transform-origin:0 0;transform:scaleX(1.0422);color:#8b572a;">Articles/Accessoires</span>
<span class="t" style="top:275px;font-size:11.3px;line-height:11.3px;right:254.00px;transform-origin:100% 0;transform:scaleX(0.9759);">7,35 €</span>
<span class="t" style="top:275px;font-size:11.3px;line-height:11.3px;left:954.60px;transform-origin:0 0;transform:scaleX(1.0356);">pc</span>
<div class="row odd" style="top:293.0px;height:26.0px"></div>
<svg class="ic" style="left:5.300px;top:295.8px" viewBox="0 0 24 24"><path d="M6 19c0 1.100.9 2 2 2h8c1.100 0 2-.9 2-2V7H6v12zM19 4h-3.500l-1-1h-5l-1 1H5v2h14V4z"/></svg><svg class="ic" style="left:27.500px;top:295.8px" viewBox="0 0 24 24"><path d="M3 17.250V21h3.750L17.810 9.940l-3.750-3.750L3 17.250zM20.710 7.040a.996.996 0 0 0 0-1.410l-2.340-2.340a.996.996 0 0 0-1.410 0l-1.830 1.830 3.750 3.750 1.830-1.830z"/></svg><svg class="ic" style="left:49.800px;top:295.8px" viewBox="0 0 24 24"><path d="M16 1H4c-1.100 0-2 .9-2 2v14h2V3h12V1zm-1 4H8c-1.100 0-1.990.9-1.990 2L6 21c0 1.100.890 2 1.990 2H19c1.100 0 2-.9 2-2V11l-6-6zM8 21V7h6v5h5v9H8z"/></svg>
<span class="t" style="top:301px;font-size:11.3px;line-height:11.3px;left:97.10px;transform-origin:0 0;transform:scaleX(0.9632);">PLINTHE</span>
<svg class="st" style="top:302.2px" viewBox="0 0 16 14.600"><path d="M4.100 0m1.800 0h1.000v2.600q0 .6.600.6h1.000q.6 0 .6-.6v-2.600h1.000q1.800 0 1.800 1.800v3.400q0 1.800-1.800 1.800h-4.200q-1.800 0-1.800-1.800v-3.400q0-1.800 1.800-1.800zM0 7.600m1.800 0h1.000v2.600q0 .6.600.6h1.000q.6 0 .6-.6v-2.600h1.000q1.800 0 1.800 1.800v3.400q0 1.800-1.800 1.800h-4.200q-1.800 0-1.800-1.800v-3.400q0-1.800 1.800-1.800zM8.200 7.600m1.800 0h1.000v2.600q0 .6.600.6h1.000q.6 0 .6-.6v-2.600h1.000q1.800 0 1.800 1.800v3.400q0 1.800-1.800 1.800h-4.200q-1.800 0-1.800-1.800v-3.400q0-1.800 1.800-1.800z"/></svg>
<span class="bd" style="top:294px;left:222.3px;width:27.0px;background:#8b0000"></span>
<span class="t" style="top:298px;font-size:9.8px;line-height:9.8px;left:227.62px;transform-origin:50% 0;transform:scaleX(1.0827);color:#fff;font-weight:bold;">109</span>
<span class="t" style="top:301px;font-size:11.4px;line-height:11.4px;left:286.40px;transform-origin:0 0;">Plinthe</span>
<span class="t" style="top:301px;font-size:11.3px;line-height:11.3px;left:526.20px;transform-origin:0 0;transform:scaleX(0.9791);">BATIDEM</span>
<span class="t" style="top:301px;font-size:11.3px;line-height:11.3px;left:641.90px;transform-origin:0 0;transform:scaleX(0.9470);">X</span>
<svg class="fo" style="top:296.5px" viewBox="0 0 24 24" fill="#9013fe"><path d="M10 4H4c-1.100 0-1.990.9-1.990 2L2 18c0 1.100.9 2 2 2h16c1.100 0 2-.9 2-2V8c0-1.100-.9-2-2-2h-8l-2-2z"/></svg>
<span class="t" style="top:301px;font-size:11.3px;line-height:11.3px;left:729.75px;transform-origin:0 0;transform:scaleX(1.0465);color:#9013fe;">Articles/Plinthe</span>
<span class="t" style="top:301px;font-size:11.3px;line-height:11.3px;right:254.00px;transform-origin:100% 0;transform:scaleX(0.9831);">80,00 €</span>
<span class="t" style="top:301px;font-size:11.3px;line-height:11.3px;left:954.60px;transform-origin:0 0;transform:scaleX(1.0356);">pc</span>
<span class="t" style="top:301px;font-size:11.3px;line-height:11.3px;right:86.60px;transform-origin:100% 0;transform:scaleX(0.9883);">196,80 €</span>
<span class="t" style="top:301px;font-size:11.3px;line-height:11.3px;left:1122.10px;transform-origin:0 0;transform:scaleX(1.0747);">m²</span>
<div class="row" style="top:319.0px;height:23.0px"></div>
<svg class="ic" style="left:5.300px;top:320.3px" viewBox="0 0 24 24"><path d="M6 19c0 1.100.9 2 2 2h8c1.100 0 2-.9 2-2V7H6v12zM19 4h-3.500l-1-1h-5l-1 1H5v2h14V4z"/></svg><svg class="ic" style="left:27.500px;top:320.3px" viewBox="0 0 24 24"><path d="M3 17.250V21h3.750L17.810 9.940l-3.750-3.750L3 17.250zM20.710 7.040a.996.996 0 0 0 0-1.410l-2.340-2.340a.996.996 0 0 0-1.410 0l-1.830 1.830 3.750 3.750 1.830-1.830z"/></svg><svg class="ic" style="left:49.800px;top:320.3px" viewBox="0 0 24 24"><path d="M16 1H4c-1.100 0-2 .9-2 2v14h2V3h12V1zm-1 4H8c-1.100 0-1.990.9-1.990 2L6 21c0 1.100.890 2 1.990 2H19c1.100 0 2-.9 2-2V11l-6-6zM8 21V7h6v5h5v9H8z"/></svg>
<span class="t" style="top:326px;font-size:11.3px;line-height:11.3px;left:97.10px;transform-origin:0 0;transform:scaleX(0.9265);">PROTECTION</span>
<span class="t" style="top:326px;font-size:11.4px;line-height:11.4px;left:286.40px;transform-origin:0 0;">Masquage - protection</span>
<span class="t" style="top:326px;font-size:11.3px;line-height:11.3px;left:526.20px;transform-origin:0 0;">Société Démo s.à r.l.</span>
<svg class="fo" style="top:321.0px" viewBox="0 0 24 24" fill="#f4a0a4"><path d="M10 4H4c-1.100 0-1.990.9-1.990 2L2 18c0 1.100.9 2 2 2h16c1.100 0 2-.9 2-2V8c0-1.100-.9-2-2-2h-8l-2-2z"/></svg>
<span class="t" style="top:326px;font-size:11.3px;line-height:11.3px;left:729.75px;transform-origin:0 0;transform:scaleX(1.0374);color:#f4a0a4;">Articles/Peinture</span>
<span class="t" style="top:326px;font-size:11.3px;line-height:11.3px;right:86.60px;transform-origin:100% 0;transform:scaleX(0.9759);">1,00 €</span>
<span class="t" style="top:326px;font-size:11.3px;line-height:11.3px;left:1122.10px;transform-origin:0 0;transform:scaleX(1.0747);">m²</span>
<div class="row odd" style="top:342.0px;height:24.0px"></div>
<svg class="ic" style="left:5.300px;top:343.8px" viewBox="0 0 24 24"><path d="M6 19c0 1.100.9 2 2 2h8c1.100 0 2-.9 2-2V7H6v12zM19 4h-3.500l-1-1h-5l-1 1H5v2h14V4z"/></svg><svg class="ic" style="left:27.500px;top:343.8px" viewBox="0 0 24 24"><path d="M3 17.250V21h3.750L17.810 9.940l-3.750-3.750L3 17.250zM20.710 7.040a.996.996 0 0 0 0-1.410l-2.340-2.340a.996.996 0 0 0-1.410 0l-1.830 1.830 3.750 3.750 1.830-1.830z"/></svg><svg class="ic" style="left:49.800px;top:343.8px" viewBox="0 0 24 24"><path d="M16 1H4c-1.100 0-2 .9-2 2v14h2V3h12V1zm-1 4H8c-1.100 0-1.990.9-1.990 2L6 21c0 1.100.890 2 1.990 2H19c1.100 0 2-.9 2-2V11l-6-6zM8 21V7h6v5h5v9H8z"/></svg>
</div>
<!-- scrollbar -->
<div class="abs" style="left:1200px;top:223px;width:3px;height:346.600px;background:#f1f1f1"></div>
<div class="abs" style="left:1200px;top:223px;width:3px;height:309px;background:#c1c1c1"></div>
<!-- FOOTER -->
<span class="t" style="top:576px;font-size:9.7px;line-height:9.7px;left:2.70px;transform-origin:0 0;transform:scaleX(1.0062);color:#6e6e6e;">Résultats par page</span>
<span class="t" style="top:593px;font-size:12.6px;line-height:12.6px;left:2.94px;transform-origin:0 0;transform:scaleX(1.0396);color:#2a2a2a;">20</span>
<svg style="left:17.800px;top:590.200px" width="19.400" height="19.400" viewBox="0 0 24 24" fill="#6a6a6a"><path d="M7 10l5 5 5-5z"/></svg>
<div class="abs" style="left:2.900px;top:611px;width:34px;height:1px;background:#8c8c8c"></div>
<div class="abs" style="left:-7px;top:609.500px;width:10px;height:12px;border-radius:50%;background:#3a3a3a"></div>
<span class="t" style="top:596px;font-size:11.3px;line-height:11.3px;left:465.98px;transform-origin:0 0;transform:scaleX(0.9695);color:#222;font-weight:bold;">Sélectionné :</span>
<span class="t" style="top:596px;font-size:11.3px;line-height:11.3px;left:536.78px;transform-origin:0 0;transform:scaleX(0.8949);color:#222;">ACRYLIQUE</span>
<svg style="left:597.400px;top:590.700px" width="18.800" height="18.800" viewBox="0 0 24 24" fill="#707070"><path d="M12 2C6.480 2 2 6.480 2 12s4.480 10 10 10 10-4.480 10-10S17.520 2 12 2zm1 15h-2v-6h2v6zm0-8h-2V7h2v2z"/></svg>
<svg style="left:619.100px;top:591.500px" width="18.900" height="18.900" viewBox="0 0 24 24" fill="#6e6e6e"><path d="M19 6.410L17.590 5 12 10.590 6.410 5 5 6.410 10.590 12 5 17.590 6.410 19 12 13.410 17.590 19 19 17.590 13.410 12z"/></svg>
<span class="t" style="top:600px;font-size:11.3px;line-height:11.3px;left:1068.27px;transform-origin:0 0;color:#222;">Résultats de 1 à 15 sur 15</span>
</body></html>
